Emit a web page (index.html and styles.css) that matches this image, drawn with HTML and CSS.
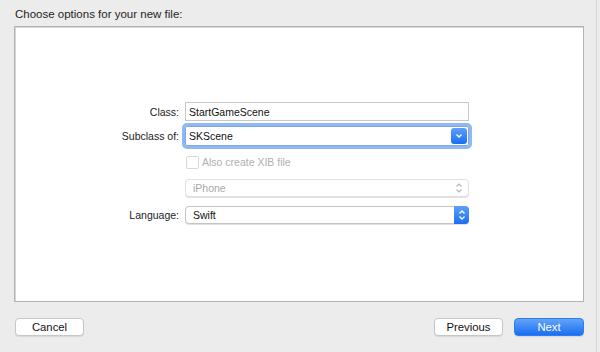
FILE: index.html
```html
<!DOCTYPE html>
<html>
<head>
<meta charset="utf-8">
<link rel="stylesheet" href="styles.css">
</head>
<body>
<div class="window">
  <div class="title">Choose options for your new file:</div>
  <div class="panel">
    <div class="form">
      <div class="row r-class">
        <label class="lbl">Class:</label>
        <div class="field text">StartGameScene</div>
      </div>
      <div class="row r-sub">
        <label class="lbl">Subclass of:</label>
        <div class="field combo focus">
          <span>SKScene</span>
          <span class="combo-btn"><svg width="8" height="6" viewBox="0 0 8 6"><path d="M1.5 1.5 L4 4 L6.5 1.5" fill="none" stroke="#fff" stroke-width="1.4"/></svg></span>
        </div>
      </div>
      <div class="row r-check">
        <span class="lbl"></span>
        <div class="check"><span class="box"></span><span>Also create XIB file</span></div>
      </div>
      <div class="row r-iphone">
        <span class="lbl"></span>
        <div class="field popup disabled">
          <span>iPhone</span>
          <svg class="arrows" width="8" height="12" viewBox="0 0 8 12"><path d="M1.5 4.5 L4 2 L6.5 4.5 M1.5 7.5 L4 10 L6.5 7.5" fill="none" stroke="#b8b8b8" stroke-width="1.2"/></svg>
        </div>
      </div>
      <div class="row r-lang">
        <label class="lbl">Language:</label>
        <div class="field popup">
          <span>Swift</span>
          <span class="pop-btn"><svg width="8" height="12" viewBox="0 0 8 12"><path d="M1.5 4.5 L4 2 L6.5 4.5 M1.5 7.5 L4 10 L6.5 7.5" fill="none" stroke="#fff" stroke-width="1.3"/></svg></span>
        </div>
      </div>
    </div>
  </div>
  <div class="buttons">
    <button class="btn">Cancel</button>
    <div class="spacer"></div>
    <button class="btn">Previous</button>
    <button class="btn primary">Next</button>
  </div>
</div>
</body>
</html>
```
FILE: styles.css
```css
html, body {
  margin: 0;
  padding: 0;
  background: #ececec;
  width: 600px;
  height: 352px;
  overflow: hidden;
  font-family: "Liberation Sans", Arial, sans-serif;
  font-size: 12px;
  color: #1a1a1a;
}
.window {
  position: relative;
  width: 597px;
  height: 352px;
  border-right: 1px solid #d4d4d4;
  box-sizing: border-box;
  padding: 0 0 0 14px;
}
.title {
  height: 26px;
  line-height: 28px;
  padding-left: 1px;
  font-size: 11.5px;
  color: #1e1e1e;
}
.panel {
  width: 570px;
  height: 276px;
  box-sizing: border-box;
  background: #fff;
  border: 1px solid #b3b3b3;
  box-shadow: inset 1px 1px 0 #d6d6d6;
}
.form {
  padding-top: 75px;
  display: flex;
  flex-direction: column;
}
.row {
  display: flex;
  align-items: center;
}
.lbl {
  width: 170px;
  text-align: right;
  padding-right: 6px;
  box-sizing: border-box;
  font-size: 10.5px;
  color: #222;
}
.field {
  width: 284px;
  box-sizing: border-box;
  display: flex;
  align-items: center;
  justify-content: space-between;
  font-size: 10.5px;
}
.text {
  height: 19px;
  border: 1px solid #c8c8c8;
  padding-left: 3px;
  color: #111;
}
.r-sub { margin-top: 5px; }
.combo {
  height: 20px;
  border: 1px solid #bcbcbc;
  padding-left: 3px;
  color: #111;
  border-radius: 2px;
}
.combo.focus {
  box-shadow: 0 0 0 3px #8fb7f0;
  border-color: #7ea7e3;
}
.combo-btn {
  width: 16px;
  height: 16px;
  margin-right: 1px;
  border-radius: 3px;
  background: linear-gradient(#5ea0f8, #1b6ff2);
  display: flex;
  align-items: center;
  justify-content: center;
}
.r-check { margin-top: 9px; height: 14px; }
.check {
  display: flex;
  align-items: center;
  color: #b0b0b0;
  padding-left: 1px;
  font-size: 10.5px;
}
.box {
  width: 11px;
  height: 11px;
  border: 1px solid #d8d8d8;
  border-radius: 2px;
  margin-right: 3px;
  background: #fff;
}
.r-iphone { margin-top: 10px; }
.popup {
  height: 18px;
  border: 1px solid #cfcfcf;
  border-radius: 4px;
  padding-left: 7px;
  background: #fff;
  box-shadow: 0 1px 0 #e0e0e0;
}
.popup.disabled { color: #a8a8a8; border-color: #e0e0e0; }
.arrows { margin-right: 5px; }
.r-lang { margin-top: 9px; }
.r-lang .popup {
  border-color: #c4c4c4;
  color: #111;
  height: 18px;
}
.pop-btn {
  width: 15px;
  height: 18px;
  margin-right: -1px;
  border-radius: 0 4px 4px 0;
  background: linear-gradient(#5ea0f8, #1b6ff2);
  display: flex;
  align-items: center;
  justify-content: center;
}
.buttons {
  display: flex;
  align-items: center;
  width: 570px;
  margin-top: 16px;
}
.spacer { flex: 1; }
.btn {
  font-family: "Liberation Sans", Arial, sans-serif;
  font-size: 11.3px;
  width: 69px;
  height: 18px;
  padding: 0;
  background: #fff;
  border: 1px solid #c6c6c6;
  border-radius: 4px;
  box-shadow: 0 1px 0 #d8d8d8;
  color: #111;
  margin-left: 11px;
}
.btn:first-child { margin-left: 1px; }
.btn.primary {
  background: linear-gradient(#62a4f8, #1a6ef2);
  border-color: #2d7cf0;
  color: #fff;
  width: 70px;
}
```
